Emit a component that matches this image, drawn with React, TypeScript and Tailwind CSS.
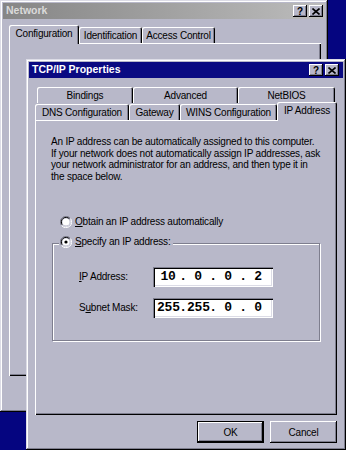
import React from "react";

function CapBtn({ kind }: { kind: "help" | "close" }) {
  return (
    <div className="w-[14px] h-[12px] bg-[#b8b8c9] shadow-[inset_-1px_-1px_#000,inset_1px_1px_#fff,inset_-2px_-2px_#7e7e8e] flex items-center justify-center">
      {kind === "help" ? (
        <span className="text-[10px] font-bold leading-none text-black mt-[1px]">?</span>
      ) : (
        <svg width="8" height="7" viewBox="0 0 8 7" className="block">
          <path d="M0.5 0.5 L7.5 6.5 M7.5 0.5 L0.5 6.5" stroke="#000" strokeWidth="1.6" />
        </svg>
      )}
    </div>
  );
}

function Tab({
  label,
  w,
  selected = false,
}: {
  label: string;
  w: string;
  selected?: boolean;
}) {
  return (
    <div
      className={
        selected
          ? `${w} relative z-10 h-[19px] -mb-[1px] bg-[#b8b8c9] rounded-t-[2px] shadow-[inset_1px_1px_#fff,inset_-1px_0_#000,inset_-2px_0_#7e7e8e] flex items-center justify-center text-black`
          : `${w} h-[16px] bg-[#b8b8c9] rounded-t-[2px] shadow-[inset_1px_1px_#fff,inset_-1px_0_#000,inset_-2px_0_#7e7e8e] flex items-center justify-center text-black`
      }
    >
      <span className={selected ? "mb-[2px]" : ""}>{label}</span>
    </div>
  );
}

function Radio({ checked }: { checked: boolean }) {
  return (
    <svg width="12" height="12" viewBox="0 0 12 12" className="block shrink-0">
      <path d="M10.5 2.5 A5 5 0 0 0 1.5 9.5" fill="none" stroke="#7e7e8e" strokeWidth="1" />
      <path d="M9.7 3.2 A4 4 0 0 0 2.3 8.8" fill="none" stroke="#000" strokeWidth="1" />
      <circle cx="6" cy="6" r="3.6" fill="#fff" />
      <path d="M1.5 9.5 A5 5 0 0 0 10.5 2.5" fill="none" stroke="#fff" strokeWidth="1" />
      <path d="M2.3 8.8 A4 4 0 0 0 9.7 3.2" fill="none" stroke="#dcdce6" strokeWidth="1" />
      {checked && <circle cx="6" cy="6" r="1.6" fill="#000" />}
    </svg>
  );
}

function Octets({ parts }: { parts: string[] }) {
  return (
    <div className="w-[120px] h-[20px] bg-white shadow-[inset_1px_1px_#7e7e8e,inset_2px_2px_#000,inset_-1px_-1px_#fff,inset_-2px_-2px_#dcdce6] flex items-center pl-[4px] font-['Liberation_Mono',monospace] text-[13px] font-bold text-black">
      {parts.map((p, i) => (
        <React.Fragment key={i}>
          <span className="w-[22px] text-center leading-none">{p}</span>
          {i < 3 && <span className="w-[8px] text-center leading-none">.</span>}
        </React.Fragment>
      ))}
    </div>
  );
}

export default function App() {
  return (
    <div className="relative w-[346px] h-[450px] overflow-hidden bg-[#050580] font-['Liberation_Sans',Arial,sans-serif] text-[10px] tracking-[-0.2px] text-black">
      {/* Network window (inactive) */}
      <div className="absolute left-0 top-0 w-[328px] h-[412px] bg-[#b8b8c9] p-[3px] flex flex-col shadow-[inset_-1px_-1px_#000,inset_1px_1px_#dcdce6,inset_-2px_-2px_#7e7e8e,inset_2px_2px_#fff]">
        <div className="h-[16px] flex items-center bg-linear-to-r from-[#868686] to-[#bcbcbc] pl-[3px] pr-[2px]">
          <span className="text-[10.5px] font-bold text-[#dadada] tracking-normal">Network</span>
          <div className="ml-auto flex gap-[2px]">
            <CapBtn kind="help" />
            <CapBtn kind="close" />
          </div>
        </div>
        <div className="mt-[7px] pl-[6px] h-[17px] flex items-end">
          <Tab label="Configuration" w="w-[70px]" selected />
          <Tab label="Identification" w="w-[63px]" />
          <Tab label="Access Control" w="w-[73px]" />
        </div>
        <div className="ml-[6px] w-[312px] h-[333px] shadow-[inset_1px_1px_#fff,inset_-1px_-1px_#000,inset_-2px_-2px_#7e7e8e]" />
      </div>

      {/* TCP/IP Properties window (active) */}
      <div className="absolute left-[26px] top-[59px] w-[320px] h-[391px] bg-[#b8b8c9] p-[3px] flex flex-col shadow-[inset_-1px_-1px_#000,inset_1px_1px_#dcdce6,inset_-2px_-2px_#7e7e8e,inset_2px_2px_#fff]">
        <div className="h-[16px] flex items-center bg-[#0a0a82] pl-[3px] pr-[4px]">
          <span className="text-[10.5px] font-bold text-white tracking-normal">TCP/IP Properties</span>
          <div className="ml-auto flex gap-[2px]">
            <CapBtn kind="help" />
            <CapBtn kind="close" />
          </div>
        </div>

        <div className="mt-[9px] px-[6px]">
          <div className="flex pl-[2px] h-[16px] items-end">
            <Tab label="Bindings" w="w-[96px]" />
            <Tab label="Advanced" w="w-[105px]" />
            <Tab label="NetBIOS" w="w-[97px]" />
          </div>
          <div className="flex h-[17px] items-end">
            <Tab label="DNS Configuration" w="w-[94px]" />
            <Tab label="Gateway" w="w-[51px]" />
            <Tab label="WINS Configuration" w="w-[97px]" />
            <Tab label="IP Address" w="w-[60px]" selected />
          </div>

          <div className="h-[295px] pt-[16px] pl-[16px] flex flex-col shadow-[inset_1px_1px_#fff,inset_-1px_-1px_#000,inset_-2px_-2px_#7e7e8e]">
            <p className="leading-[11.67px]">
              <span className="block">An IP address can be automatically assigned to this computer.</span>
              <span className="block">If your network does not automatically assign IP addresses, ask</span>
              <span className="block">your network administrator for an address, and then type it in</span>
              <span className="block">the space below.</span>
            </p>

            <div className="mt-[32px] ml-[9px] h-[14px] flex items-center gap-[3px]">
              <Radio checked={false} />
              <span>
                <span className="underline underline-offset-1">O</span>btain an IP address automatically
              </span>
            </div>

            <div className="mt-[14px] ml-[1px] w-[268px] h-[98px] border border-[#7e7e8e] shadow-[1px_1px_#fff,inset_1px_1px_#fff] flex flex-col">
              <div className="-mt-[9px] ml-[6px] h-[14px] self-start flex items-center gap-[3px] bg-[#b8b8c9] pl-[1px] pr-[2px]">
                <Radio checked />
                <span>
                  <span className="underline underline-offset-1">S</span>pecify an IP address:
                </span>
              </div>
              <div className="mt-[18px] pl-[26px] flex items-center">
                <span className="w-[74px]">
                  <span className="underline underline-offset-1">I</span>P Address:
                </span>
                <Octets parts={["10", "0", "0", "2"]} />
              </div>
              <div className="mt-[11px] pl-[26px] flex items-center">
                <span className="w-[74px]">
                  S<span className="underline underline-offset-1">u</span>bnet Mask:
                </span>
                <Octets parts={["255", "255", "0", "0"]} />
              </div>
            </div>
          </div>

          <div className="mt-[6px] flex justify-end gap-[6px]">
            <div className="w-[67px] h-[22px] flex items-center justify-center shadow-[inset_0_0_0_1px_#000,inset_-2px_-2px_#000,inset_2px_2px_#fff,inset_-3px_-3px_#7e7e8e]">
              OK
            </div>
            <div className="w-[67px] h-[22px] flex items-center justify-center shadow-[inset_-1px_-1px_#000,inset_1px_1px_#fff,inset_-2px_-2px_#7e7e8e]">
              Cancel
            </div>
          </div>
        </div>
      </div>
    </div>
  );
}
